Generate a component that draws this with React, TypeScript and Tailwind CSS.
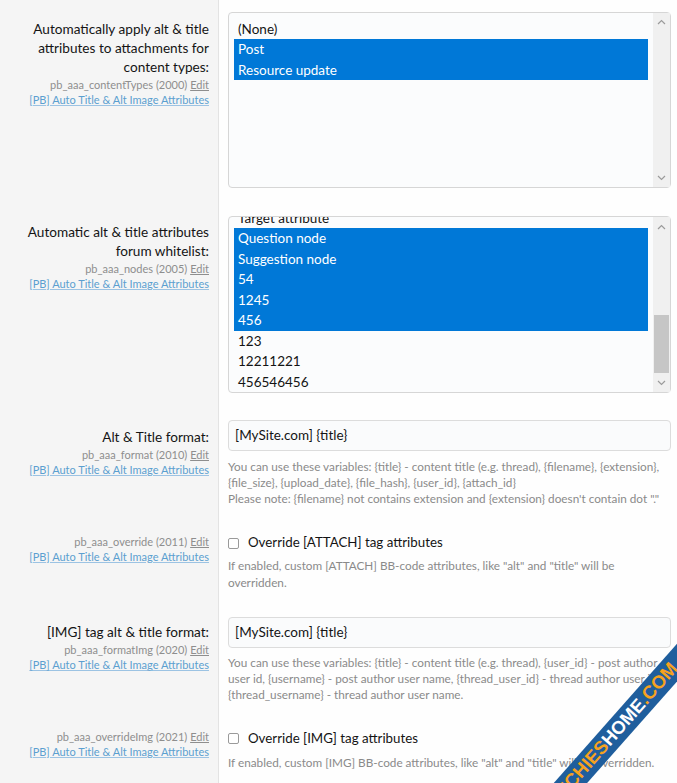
import React from "react";

const FONT = "font-['Lato','Noto_Sans',sans-serif]";

function Chevron({ dir }: { dir: "up" | "down" }) {
  return (
    <svg width="9" height="6" viewBox="0 0 9 6" className="block">
      {dir === "up" ? (
        <polyline points="1,5 4.5,1.5 8,5" fill="none" stroke="#9b9b9b" strokeWidth="1.2" />
      ) : (
        <polyline points="1,1 4.5,4.5 8,1" fill="none" stroke="#9b9b9b" strokeWidth="1.2" />
      )}
    </svg>
  );
}

function Meta({ name }: { name: string }) {
  return (
    <div className="text-[11px] leading-[15px]">
      <div className="text-[#8e8e8e]">
        {name} <span className="underline">Edit</span>
      </div>
      <div className="text-[#5b9fd0] underline decoration-[#9cc3e3]">[PB] Auto Title &amp; Alt Image Attributes</div>
    </div>
  );
}

function Item({ text, sel }: { text: string; sel?: boolean }) {
  return (
    <div
      className={
        "h-[20.5px] pl-[4px] text-[13.5px] leading-[20.5px] whitespace-nowrap " +
        (sel ? "bg-[#0078d7] text-white" : "text-[#141414]")
      }
    >
      {text}
    </div>
  );
}

function Checkbox() {
  return <span className="inline-block h-[11px] w-[11px] shrink-0 rounded-[2px] border border-[#9a9a9a] bg-white" />;
}

export default function App() {
  return (
    <div className={"relative h-[783px] w-full overflow-hidden bg-[#fefefe] text-[#141414] " + FONT}>
      {/* Row 1 */}
      <div className="flex">
        <div className="w-[219px] shrink-0 border-r border-[#e3e3e3] bg-[#f5f5f5] pr-[9px] pt-[19.5px] text-right">
          <div className="text-[13.6px] leading-[19px]">
            Automatically apply alt &amp; title
            <br />
            attributes to attachments for
            <br />
            content types:
          </div>
          <Meta name="pb_aaa_contentTypes (2000)" />
        </div>
        <div className="flex-1 pb-[14px] pl-[9px] pr-[6px] pt-[12px]">
          <div className="flex h-[176px] rounded-[4px] border border-[#d6d6d6] bg-[#fbfcfd]">
            <div className="flex-1 overflow-hidden px-[5px] pt-[5.5px]">
              <Item text="(None)" />
              <Item text="Post" sel />
              <Item text="Resource update" sel />
            </div>
            <div className="flex w-[17px] flex-col items-center justify-between bg-[#f0f0f0] py-[6px]">
              <Chevron dir="up" />
              <Chevron dir="down" />
            </div>
          </div>
        </div>
      </div>

      {/* Row 2 */}
      <div className="flex">
        <div className="w-[219px] shrink-0 border-r border-[#e3e3e3] bg-[#f5f5f5] pr-[9px] pt-[20.8px] text-right">
          <div className="text-[13.6px] leading-[19px]">
            Automatic alt &amp; title attributes
            <br />
            forum whitelist:
          </div>
          <Meta name="pb_aaa_nodes (2005)" />
        </div>
        <div className="flex-1 pb-[13px] pl-[9px] pr-[6px] pt-[14px]">
          <div className="flex h-[177px] rounded-[4px] border border-[#d6d6d6] bg-[#fbfcfd]">
            <div className="flex-1 overflow-hidden px-[5px]">
              <div className="mt-[-9.5px]">
                <Item text="Target attribute" />
                <Item text="Question node" sel />
                <Item text="Suggestion node" sel />
                <Item text="54" sel />
                <Item text="1245" sel />
                <Item text="456" sel />
                <Item text="123" />
                <Item text="12211221" />
                <Item text="456546456" />
              </div>
            </div>
            <div className="flex w-[17px] flex-col items-center bg-[#f0f0f0] pb-[6px] pt-[7px]">
              <Chevron dir="up" />
              <div className="flex-1" />
              <div className="mb-[7px] h-[58px] w-[15px] bg-[#c6c6c6]" />
              <Chevron dir="down" />
            </div>
          </div>
        </div>
      </div>

      {/* Row 3 */}
      <div className="flex">
        <div className="w-[219px] shrink-0 border-r border-[#e3e3e3] bg-[#f5f5f5] pr-[9px] pt-[22px] text-right">
          <div className="text-[13.6px] leading-[19px]">Alt &amp; Title format:</div>
          <Meta name="pb_aaa_format (2010)" />
        </div>
        <div className="flex-1 pb-[14.5px] pl-[9px] pr-[6px] pt-[14px]">
          <div className="flex h-[31px] items-center rounded-[4px] border border-[#dcdcdc] bg-[#fafbfc] pl-[6px] text-[13.5px]">
            [MySite.com] {"{title}"}
          </div>
          <div className="mt-[7.5px] whitespace-nowrap text-[11.75px] leading-[16px] text-[#8a8a8a]">
            You can use these variables: {"{title}"} - content title (e.g. thread), {"{filename}"}, {"{extension}"},
            <br />
            {"{file_size}"}, {"{upload_date}"}, {"{file_hash}"}, {"{user_id}"}, {"{attach_id}"}
            <br />
            Please note: {"{filename}"} not contains extension and {"{extension}"} doesn't contain dot "."
          </div>
        </div>
      </div>

      {/* Row 4 */}
      <div className="flex">
        <div className="w-[219px] shrink-0 border-r border-[#e3e3e3] bg-[#f5f5f5] pr-[9px] pt-[12.5px] text-right">
          <Meta name="pb_aaa_override (2011)" />
        </div>
        <div className="flex-1 pb-[10.5px] pl-[9px] pr-[6px] pt-[12.3px]">
          <div className="flex h-[20px] items-center gap-[9px] text-[13.3px]">
            <Checkbox />
            <span>Override [ATTACH] tag attributes</span>
          </div>
          <div className="mt-[3.6px] whitespace-nowrap text-[11.75px] leading-[17.6px] text-[#8a8a8a]">
            If enabled, custom [ATTACH] BB-code attributes, like "alt" and "title" will be
            <br />
            overridden.
          </div>
        </div>
      </div>

      {/* Row 5 */}
      <div className="flex">
        <div className="w-[219px] shrink-0 border-r border-[#e3e3e3] bg-[#f5f5f5] pr-[9px] pt-[20.8px] text-right">
          <div className="text-[13.6px] leading-[19px]">[IMG] tag alt &amp; title format:</div>
          <Meta name="pb_aaa_formatImg (2020)" />
        </div>
        <div className="flex-1 pb-[14px] pl-[9px] pr-[6px] pt-[14px]">
          <div className="flex h-[31px] items-center rounded-[4px] border border-[#dcdcdc] bg-[#fafbfc] pl-[6px] text-[13.5px]">
            [MySite.com] {"{title}"}
          </div>
          <div className="mt-[7px] whitespace-nowrap text-[11.75px] leading-[16px] text-[#8a8a8a]">
            You can use these variables: {"{title}"} - content title (e.g. thread), {"{user_id}"} - post author
            <br />
            user id, {"{username}"} - post author user name, {"{thread_user_id}"} - thread author user id,
            <br />
            {"{thread_username}"} - thread author user name.
          </div>
        </div>
      </div>

      {/* Row 6 */}
      <div className="flex">
        <div className="w-[219px] shrink-0 border-r border-[#e3e3e3] bg-[#f5f5f5] pb-[40px] pr-[9px] pt-[12.2px] text-right">
          <Meta name="pb_aaa_overrideImg (2021)" />
        </div>
        <div className="flex-1 pb-[40px] pl-[9px] pr-[6px] pt-[12px]">
          <div className="flex h-[20px] items-center gap-[9px] text-[13.3px]">
            <Checkbox />
            <span>Override [IMG] tag attributes</span>
          </div>
          <div className="mt-[5.5px] whitespace-nowrap text-[11.75px] leading-[17.6px] text-[#8a8a8a]">
            If enabled, custom [IMG] BB-code attributes, like "alt" and "title" will be overridden.
          </div>
        </div>
      </div>

      {/* Watermark ribbon */}
      <div className="pointer-events-none absolute left-[474px] top-[710px] flex h-[25px] w-[300px] rotate-[-48.5deg] items-center justify-center bg-[#1f5e9d] pr-[32px] font-['Liberation_Sans',sans-serif] text-[18.5px] font-bold leading-none">
        <span className="text-[#f6a21e]">TECHIES</span>
        <span className="text-white">HOME</span>
        <span className="text-[#f6a21e]">.COM</span>
      </div>
    </div>
  );
}
